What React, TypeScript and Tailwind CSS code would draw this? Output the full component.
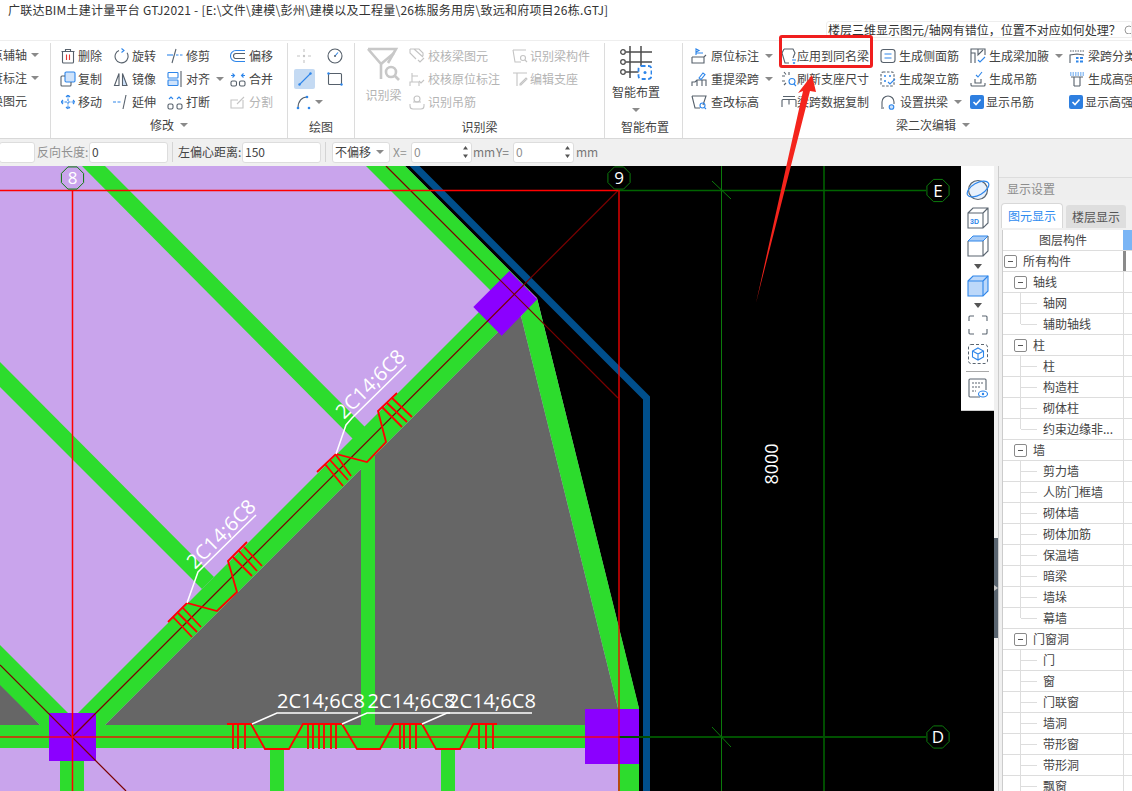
import React from "react";

const D = "#56606b";
const B = "#2e86ea";
const L = "#cfe3fb";
const G = "#c4c4c4";
const CAD = "'Open Sans', 'Liberation Sans', sans-serif";

function Ic({ children, s = 16 }: { children?: React.ReactNode; s?: number }) {
  return (
    <svg width={s} height={s} viewBox="0 0 16 16" fill="none" strokeWidth={1.1} className="shrink-0">
      {children}
    </svg>
  );
}

const icons: Record<string, React.ReactNode> = {
  trash: (
    <>
      <path d="M1.5 3.5h13M5.5 3.5V1.5h5v2M2.5 3.5V14a1 1 0 001 1h9a1 1 0 001-1V3.5" stroke={D} />
      <path d="M6.5 6.5v5.5M9.5 6.5v5.5" stroke="#e53935" />
    </>
  ),
  copy: (
    <>
      <rect x="5" y="1" width="10" height="10" rx="1.2" fill={L} stroke={B} />
      <path d="M5 5H2a1 1 0 00-1 1v8a1 1 0 001 1h8a1 1 0 001-1v-3" stroke={D} />
    </>
  ),
  move: (
    <path
      d="M8 1v14M1 8h14M6 3l2-2 2 2M6 13l2 2 2-2M3 6L1 8l2 2M13 6l2 2-2 2"
      stroke={B}
      strokeDasharray="2.5 1"
    />
  ),
  rotate: (
    <>
      <path d="M6 2.4a6.5 6.5 0 108 2.4" stroke={D} />
      <path d="M8.5 0.5L11 2.5 8.5 4.5" stroke={B} />
    </>
  ),
  mirror: (
    <>
      <path d="M6 2.5L1.5 14.5H6z" stroke={D} />
      <path d="M9.5 2.5l4.5 12H9.5z" fill={L} stroke={D} />
    </>
  ),
  extend: (
    <>
      <path d="M0 8h9" stroke={B} strokeDasharray="3 1.5" />
      <path d="M13 1l-3 14" stroke={D} />
    </>
  ),
  trim: (
    <>
      <path d="M0 7h6" stroke={B} />
      <path d="M9 1L5 15" stroke={D} />
      <path d="M9 7h7" stroke={B} strokeDasharray="2.5 1.5" />
    </>
  ),
  align: (
    <>
      <rect x="1" y="1.5" width="10" height="5.5" rx="0.8" stroke={B} />
      <rect x="1" y="9" width="10" height="5.5" rx="0.8" fill={L} stroke={B} />
      <path d="M14 0v16" stroke={D} />
    </>
  ),
  break: (
    <>
      <rect x="1" y="10" width="5" height="5" rx="1.5" stroke={D} />
      <rect x="10" y="10" width="5" height="5" rx="1.5" stroke={D} />
      <path d="M2 5l2-2 2 2M10 5l2-2 2 2" stroke={B} />
    </>
  ),
  offset: (
    <>
      <path d="M15 2.5H6a5.5 5.5 0 000 11h9" stroke={B} />
      <path d="M15 5.5H6a2.5 2.5 0 000 5h9" stroke={D} />
    </>
  ),
  merge: (
    <>
      <rect x="1" y="10" width="5.5" height="5" rx="1.5" stroke={D} />
      <rect x="9.5" y="10" width="5.5" height="5" rx="1.5" stroke={D} />
      <path d="M1 4.5h3M2.5 2.5l2 2-2 2M15 4.5h-3M13.5 2.5l-2 2 2 2" stroke={B} />
    </>
  ),
  split: (
    <>
      <path d="M13 6v8H1V6h7" stroke={G} />
      <path d="M7 10l7-7" stroke={G} />
    </>
  ),
  point: (
    <>
      <path d="M8 1v3M8 12v3M1 8h3M12 8h3" stroke={G} />
      <circle cx="8" cy="8" r="1.2" fill={G} />
    </>
  ),
  clock: (
    <>
      <circle cx="8" cy="8" r="7" stroke={D} />
      <path d="M8 8l3-3.5" stroke={B} />
      <circle cx="8" cy="8" r="1" fill={D} />
    </>
  ),
  line: (
    <>
      <path d="M2.5 13.5L13.5 2.5" stroke={B} />
      <circle cx="2.5" cy="13.5" r="1.2" fill={B} />
      <circle cx="13.5" cy="2.5" r="1.2" fill={B} />
    </>
  ),
  rect: (
    <>
      <rect x="1.5" y="2.5" width="13" height="11" rx="1" stroke={D} />
      <circle cx="1.5" cy="2.5" r="1.2" fill={B} />
      <circle cx="14.5" cy="13.5" r="1.2" fill={B} />
    </>
  ),
  arc: (
    <>
      <path d="M2 14C2 7 6 3 11 3" stroke={D} />
      <circle cx="2" cy="14" r="1.3" fill={B} />
      <circle cx="11" cy="3" r="1.3" fill={B} />
      <circle cx="13" cy="14" r="1.3" fill={B} />
    </>
  ),
  chk1: (
    <>
      <path d="M1 1h9l4 4v3M1 1v4l6 6M5 1l9 8" stroke={G} />
      <path d="M9 12l2 2 4-4" stroke={G} />
    </>
  ),
  chk2: (
    <>
      <path d="M1 15V11h9v4M3 11V2M3 5h6" stroke={G} />
      <path d="M10 10l2 2 3-3" stroke={G} />
    </>
  ),
  hang: (
    <>
      <circle cx="8" cy="5" r="3" stroke={G} />
      <path d="M1 10v2a3 3 0 003 3h8a3 3 0 003-3v-2M4 8h8" stroke={G} />
    </>
  ),
  idc: (
    <>
      <path d="M1 2h13M1 2l2 12h6" stroke={G} />
      <circle cx="11" cy="10" r="2.5" stroke={G} />
      <path d="M13 12l2 2" stroke={G} />
    </>
  ),
  edit: (
    <>
      <path d="M1 2h14M5 2v13" stroke={G} />
      <path d="M8 13l6-6 1 1-6 6H8z" stroke={G} />
    </>
  ),
  orig: (
    <>
      <path d="M1 9h12l2-2M1 9v6h12V9" stroke={D} />
      <path d="M5 7V1l3 1.5L5 4M5 5h7" stroke={B} />
    </>
  ),
  refetch: (
    <>
      <path d="M1 15V11h3l2-2 9 0v6M6 9v6M11 9v6" stroke={D} />
      <path d="M8 7l4-5 2 1.5-4 5z" stroke={B} />
    </>
  ),
  query: (
    <>
      <path d="M1 2h14l-3 9M1 2l3 12h5" stroke={D} />
      <circle cx="11.5" cy="11.5" r="2.5" stroke={B} />
      <path d="M13.5 13.5l1.5 1.5" stroke={B} />
    </>
  ),
  apply: (
    <>
      <path d="M3 1h9l2 4-2 5M3 1L1 5l3 10h4" stroke={D} />
      <path d="M11 12h4M12 14.5l1 1 1-1" stroke={B} />
    </>
  ),
  refresh: (
    <>
      <path d="M1 5h3M3 1l2 2.500M8 1v3M1 10h3M3 14l2-2" stroke={D} />
      <circle cx="11" cy="10.5" r="3" stroke={B} />
      <path d="M13 13l2 2" stroke={B} />
    </>
  ),
  span: <path d="M1 13V6.500a1 1 0 011-1h12a1 1 0 011 1V13M2 2.500h12M8 5.500v5" stroke={D} />,
  side: (
    <>
      <rect x="1" y="1.5" width="14" height="13" rx="2.5" stroke={D} />
      <path d="M4.5 6h7M4.5 10h7" stroke={B} />
    </>
  ),
  frame: (
    <>
      <rect x="1" y="1" width="13" height="14" rx="2" stroke={D} strokeDasharray="2.5 1.5" />
      <circle cx="5" cy="5" r="1" fill={B} />
      <circle cx="10" cy="5" r="1" fill={B} />
      <circle cx="5" cy="10" r="1" fill={B} />
      <path d="M8 11l2 2 5-5" stroke={B} />
    </>
  ),
  arch: (
    <>
      <path d="M2 13V8a6 6 0 0112 0v2" stroke={D} />
      <circle cx="11.5" cy="13" r="2.3" fill={L} stroke={B} />
      <path d="M1 14h3" stroke={D} />
    </>
  ),
  haunch: (
    <>
      <path d="M1 15V1h14v6M1 5h4v10" stroke={D} />
      <path d="M8 1v6l5-5" stroke={D} />
      <path d="M8 12l2 2 5-5" stroke={B} />
    </>
  ),
  genHang: (
    <>
      <path d="M1 12v2a1 1 0 001 1h12a1 1 0 001-1v-2M5 8v4h6V8" stroke={D} />
      <path d="M6 4l2 2 4-5" stroke={B} />
    </>
  ),
  cat: (
    <>
      <path d="M1 15V7l7-1 7 1" stroke={D} />
      <path d="M1 3h14" stroke={D} strokeDasharray="1.5 1" />
      <path d="M7 9h2.5v2H7zM11 9h3v2h-3zM7 12.500h2.500v2H7zM11 12.500h3v2h-3z" fill={B} />
    </>
  ),
  high: (
    <>
      <path d="M1 2h14M1 4h14" stroke={B} strokeDasharray="1.500 1" />
      <path d="M2 6h12M5 6v9M11 6v9M5 15h6" stroke={D} />
    </>
  ),
};

function Arrow({ className = "" }: { className?: string }) {
  return (
    <svg width="8" height="4" viewBox="0 0 8 4" className={`shrink-0 ${className}`}>
      <path d="M0 0h8L4 4z" fill="#8a8a8a" />
    </svg>
  );
}

function Item({
  icon,
  text,
  gap = "ml-[2px]",
  dim,
  arrow,
  arrowGap = "ml-[6px]",
}: {
  icon: string;
  text: string;
  gap?: string;
  dim?: boolean;
  arrow?: boolean;
  arrowGap?: string;
}) {
  return (
    <div className={`flex h-[23px] items-center whitespace-nowrap ${dim ? "text-[#b4b4b4]" : "text-[#444]"}`}>
      <Ic>{icons[icon]}</Ic>
      <span className={gap}>{text}</span>
      {arrow && <Arrow className={arrowGap} />}
    </div>
  );
}

function Check({ text }: { text: string }) {
  return (
    <div className="flex h-[23px] items-center whitespace-nowrap text-[#444]">
      <span className="flex h-[14px] w-[14px] items-center justify-center rounded-[2px] bg-[#2e7fe0]">
        <svg width="10" height="10" viewBox="0 0 10 10" fill="none">
          <path d="M1.500 5l2.500 2.500 4.500-5" stroke="#fff" strokeWidth="1.600" />
        </svg>
      </span>
      <span className="ml-[2px]">{text}</span>
    </div>
  );
}

function Group({
  w,
  label,
  arrow,
  labelClass = "",
  children,
}: {
  w: string;
  label: string;
  arrow?: boolean;
  labelClass?: string;
  children: React.ReactNode;
}) {
  return (
    <div className={`flex h-[95px] shrink-0 flex-col border-r border-[#dcdcdc] ${w}`}>
      <div className="flex h-[69px] pt-px">{children}</div>
      <div className={`flex flex-1 items-center justify-center text-[12px] text-[#444] ${labelClass}`}>
        <span>{label}</span>
        {arrow && <Arrow className="ml-[6px]" />}
      </div>
    </div>
  );
}

function FunnelBig() {
  return (
    <svg width="36" height="36" viewBox="0 0 36 36" fill="none" stroke="#c8c8c8" strokeWidth="2.600">
      <path d="M2 2h28L22 16M2 2l13 15v15" />
      <path d="M15 17L28 6" />
      <circle cx="25" cy="25" r="5" />
      <path d="M29 29l4 4" />
    </svg>
  );
}

function SmartBig() {
  return (
    <svg width="32" height="34" viewBox="0 0 32 34" fill="none" className="shrink-0">
      <path d="M6 6h26M6 16h26M6 26h13M10 0v32M21 0v21" stroke="#4c4c4c" strokeWidth="1.500" />
      <circle cx="3" cy="6" r="2.300" fill="#fff" stroke="#4c4c4c" strokeWidth="1.300" />
      <circle cx="3" cy="16" r="2.300" fill="#fff" stroke="#4c4c4c" strokeWidth="1.300" />
      <circle cx="3" cy="26" r="2.300" fill="#fff" stroke="#4c4c4c" strokeWidth="1.300" />
      <rect x="18.500" y="20" width="13" height="13" rx="3" fill="#fff" stroke="#2e86ea" strokeWidth="1.800" strokeDasharray="4 2.500" />
      <circle cx="25" cy="26.500" r="1.500" fill="#2e86ea" />
    </svg>
  );
}

function Ribbon() {
  return (
    <div className="flex h-[99px] overflow-hidden border-b border-[#d8d8d8] border-t border-t-[#eeeeee] bg-white pt-[2px] text-[12px]">
      <Group w="w-[51px]" label="">
        <div className="flex w-[50px] flex-col items-end overflow-hidden pr-[11px]">
          {[
            ["两点辅轴", true],
            ["长度标注", true],
            ["转换图元", false],
          ].map(([t, a]) => (
            <div key={t as string} className="flex h-[23px] items-center whitespace-nowrap text-[#444]">
              <span>{t as string}</span>
              {a ? <Arrow className="ml-[4px]" /> : <span className="w-[12px]" />}
            </div>
          ))}
        </div>
      </Group>
      <Group w="w-[237px]" label="修改" arrow>
        <div className="ml-[9px] w-[53px]">
          <Item icon="trash" text="删除" />
          <Item icon="copy" text="复制" />
          <Item icon="move" text="移动" />
        </div>
        <div className="w-[54px]">
          <Item icon="rotate" text="旋转" gap="ml-[3px]" />
          <Item icon="mirror" text="镜像" gap="ml-[3px]" />
          <Item icon="extend" text="延伸" gap="ml-[3px]" />
        </div>
        <div className="w-[63px]">
          <Item icon="trim" text="修剪" gap="ml-[3px]" />
          <Item icon="align" text="对齐" gap="ml-[3px]" arrow />
          <Item icon="break" text="打断" gap="ml-[3px]" />
        </div>
        <div>
          <Item icon="offset" text="偏移" gap="ml-[3px]" />
          <Item icon="merge" text="合并" gap="ml-[3px]" />
          <Item icon="split" text="分割" gap="ml-[3px]" dim />
        </div>
      </Group>
      <Group w="w-[67px]" label="绘图" labelClass="pt-[4px]">
        <div className="ml-[6px] w-[32px]">
          <div className="flex h-[23px] items-center pl-[2px]">
            <Ic>{icons.point}</Ic>
          </div>
          <div className="flex h-[23px] items-center">
            <div className="flex h-[20px] w-[21px] items-center justify-center rounded-[2px] bg-[#c4daf3]">
              <Ic>{icons.line}</Ic>
            </div>
          </div>
          <div className="flex h-[23px] items-center pl-[2px]">
            <Ic>{icons.arc}</Ic>
            <Arrow className="ml-[3px]" />
          </div>
        </div>
        <div className="ml-[1px]">
          <div className="flex h-[23px] items-center">
            <Ic>{icons.clock}</Ic>
          </div>
          <div className="flex h-[23px] items-center">
            <Ic>{icons.rect}</Ic>
          </div>
        </div>
      </Group>
      <Group w="w-[250px]" label="识别梁" labelClass="pt-[4px]">
        <div className="flex w-[54px] flex-col items-center pl-[3px] pt-[3px] text-[#b4b4b4]">
          <FunnelBig />
          <span className="mt-[3px]">识别梁</span>
        </div>
        <div className="w-[103px]">
          <Item icon="chk1" text="校核梁图元" gap="ml-[3px]" dim />
          <Item icon="chk2" text="校核原位标注" gap="ml-[3px]" dim />
          <Item icon="hang" text="识别吊筋" gap="ml-[3px]" dim />
        </div>
        <div>
          <Item icon="idc" text="识别梁构件" gap="ml-[2px]" dim />
          <Item icon="edit" text="编辑支座" gap="ml-[2px]" dim />
        </div>
      </Group>
      <Group w="w-[78px]" label="智能布置" labelClass="pt-[4px] pl-[3px]">
        <div className="ml-[7px] flex w-[48px] flex-col items-center pt-[2px] text-[#444]">
          <SmartBig />
          <span className="mt-[3px] whitespace-nowrap">智能布置</span>
          <Arrow className="mt-[7px]" />
        </div>
      </Group>
      <div className="flex h-[95px] w-[500px] shrink-0 flex-col">
        <div className="flex h-[69px] pt-px pl-[8px]">
          <div className="w-[90px] shrink-0">
            <Item icon="orig" text="原位标注" gap="ml-[4px]" arrow />
            <Item icon="refetch" text="重提梁跨" gap="ml-[4px]" arrow />
            <Item icon="query" text="查改标高" gap="ml-[4px]" />
          </div>
          <div className="w-[99px] shrink-0">
            <Item icon="apply" text="应用到同名梁" gap="ml-[0px]" />
            <Item icon="refresh" text="刷新支座尺寸" gap="ml-[0px]" />
            <Item icon="span" text="梁跨数据复制" gap="ml-[0px]" />
          </div>
          <div className="w-[90px] shrink-0">
            <Item icon="side" text="生成侧面筋" gap="ml-[3px]" />
            <Item icon="frame" text="生成架立筋" gap="ml-[3px]" />
            <Item icon="arch" text="设置拱梁" gap="ml-[4px]" arrow />
          </div>
          <div className="w-[99px] shrink-0">
            <Item icon="haunch" text="生成梁加腋" gap="ml-[3px]" arrow />
            <Item icon="genHang" text="生成吊筋" gap="ml-[3px]" />
            <Check text="显示吊筋" />
          </div>
          <div className="shrink-0">
            <Item icon="cat" text="梁跨分类" gap="ml-[3px]" />
            <Item icon="high" text="生成高强箍筋" gap="ml-[3px]" />
            <Check text="显示高强箍筋" />
          </div>
        </div>
        <div className="flex flex-1 items-center justify-center text-[12px] text-[#444]">
          <span>梁二次编辑</span>
          <Arrow className="ml-[6px]" />
        </div>
      </div>
    </div>
  );
}

function Spin() {
  return (
    <svg width="7" height="14" viewBox="0 0 7 14" className="shrink-0">
      <path d="M3.500 1L6 4.500H1zM3.500 13L1 9.500h5z" fill="#555" />
    </svg>
  );
}

function Box({ w, children, className = "" }: { w: string; children?: React.ReactNode; className?: string }) {
  return (
    <div className={`flex h-[21px] shrink-0 items-center rounded-[3px] border border-[#dddddd] bg-white px-[2px] ${w} ${className}`}>
      {children}
    </div>
  );
}

function OptionBar() {
  return (
    <div className="flex h-[27px] items-center bg-[#f0f0f0] pb-px text-[12px] text-[#444]">
      <Box w="w-[36px]" className="-ml-px" />
      <span className="ml-[2px] w-[52px] shrink-0 whitespace-nowrap text-[#909090]">反向长度:</span>
      <Box w="w-[79px]">0</Box>
      <span className="ml-[4px] h-[20px] w-px shrink-0 bg-[#d4d4d4]" />
      <span className="ml-[5px] w-[64px] shrink-0 whitespace-nowrap">左偏心距离:</span>
      <Box w="w-[79px]">150</Box>
      <span className="ml-[4px] h-[20px] w-px shrink-0 bg-[#d4d4d4]" />
      <Box w="w-[58px]" className="ml-[6px] justify-between pr-[5px]">
        不偏移
        <Arrow />
      </Box>
      <span className="ml-[3px] w-[18px] shrink-0 text-[#909090]">X=</span>
      <Box w="w-[61px]" className="justify-between pr-[2px] text-[#909090]">
        0
        <Spin />
      </Box>
      <span className="ml-[1px] w-[23px] shrink-0 text-[#777]">mm</span>
      <span className="w-[17px] shrink-0 text-[#777]">Y=</span>
      <Box w="w-[61px]" className="justify-between pr-[2px] text-[#909090]">
        0
        <Spin />
      </Box>
      <span className="ml-[2px] shrink-0 text-[#777]">mm</span>
    </div>
  );
}

function Octa({ cx, cy, t, fs = 17 }: { cx: number; cy: number; t: string; fs?: number }) {
  const pts = Array.from({ length: 8 }, (_, i) => {
    const a = Math.PI / 8 + (i * Math.PI) / 4;
    return `${cx + 12 * Math.cos(a)},${cy + 12 * Math.sin(a)}`;
  }).join(" ");
  return (
    <>
      <polygon points={pts} fill="none" stroke="#0d7a0d" strokeWidth="1" />
      <text x={cx} y={cy + 6} fill="#fff" fontSize={fs} textAnchor="middle" fontFamily={CAD}>
        {t}
      </text>
    </>
  );
}

function Stirrups({ segs }: { segs: number[][] }) {
  return (
    <>
      {segs.map((s, i) => (
        <line key={i} x1={s[0]} y1={s[1]} x2={s[2]} y2={s[3]} stroke="#ff0000" strokeWidth="1.800" />
      ))}
    </>
  );
}

function Label({ x, y, rot }: { x: number; y: number; rot?: boolean }) {
  return (
    <text
      x={x}
      y={y}
      fill="#fff"
      fontSize="20"
      textLength="88"
      lengthAdjust="spacingAndGlyphs"
      fontFamily={CAD}
      transform={rot ? `rotate(-45 ${x} ${y})` : undefined}
    >
      2C14;6C8
    </text>
  );
}

function Canvas() {
  const purple = "#8b00ff";
  const green = "#2ddc2d";
  const bottomX = [233, 238, 245, 308, 313, 319, 324, 331, 336, 400, 404, 410, 416, 479, 486, 493];
  return (
    <svg width="961" height="625" viewBox="0 166 961 625" className="block shrink-0">
      <rect x="0" y="166" width="961" height="625" fill="#000" />
      <polygon points="0,166 405,166 537,298 639,709 639,791 0,791" fill="#c9a4ec" />
      <polygon points="505,325 521,316 618,708 618,725 105,725" fill="#666666" />
      <polygon points="0,683 40,725 0,725" fill="#666666" />
      <g fill={green}>
        <polygon points="366,166 405,166 530,291 491,291" />
        <polygon points="537,298 639,708 639,791 618,791 618,708 521,316" />
        <polygon points="495,296 522,308 105,725 66,725" />
        <polygon points="0,645 68,713 70,725 40,725 0,685" />
        <polygon points="82,166 105,166 366,428 354,440" />
        <polygon points="0,362 0,387 202,589 214,577" />
        <rect x="361" y="455" width="14" height="270" />
        <rect x="0" y="725" width="618" height="23" />
        <rect x="60" y="748" width="24" height="43" />
        <rect x="270" y="748" width="14" height="43" />
        <rect x="441" y="748" width="14" height="43" />
      </g>
      <polygon points="509.300,271 537.300,299.300 501.700,335.700 473.300,307" fill={purple} />
      <rect x="49" y="713" width="47" height="48" fill={purple} />
      <rect x="585" y="709" width="54" height="55" fill={purple} />
      <path d="M412 163.500L646.500 398V791" fill="none" stroke="#004f8c" strokeWidth="7" />

      <line x1="721.500" y1="166" x2="721.500" y2="791" stroke="#0b7a0b" strokeWidth="1" />
      <line x1="824" y1="166" x2="824" y2="791" stroke="#004d00" strokeWidth="2" />
      <line x1="618" y1="190.500" x2="926" y2="190.500" stroke="#006400" strokeWidth="1.500" />
      <line x1="618" y1="737" x2="926" y2="737" stroke="#005000" strokeWidth="2" />
      <line x1="712" y1="181" x2="731" y2="199" stroke="#0b7a0b" strokeWidth="1" />
      <line x1="712" y1="727" x2="731" y2="747" stroke="#0b7a0b" strokeWidth="1" />

      <line x1="618.500" y1="190" x2="72" y2="737" stroke="#7a0000" strokeWidth="1.200" />
      <line x1="0" y1="665" x2="126" y2="791" stroke="#7a0000" strokeWidth="1.200" />
      <line x1="386" y1="166" x2="618" y2="398" stroke="#7a0000" strokeWidth="1.200" />

      <line x1="0" y1="190.500" x2="618" y2="190.500" stroke="#ff0000" strokeWidth="1.500" />
      <line x1="72.500" y1="190" x2="72.500" y2="791" stroke="#ff0000" strokeWidth="1.500" />
      <line x1="619" y1="190" x2="619" y2="791" stroke="#ff0000" strokeWidth="2" opacity="0.65" />
      <line x1="0" y1="737" x2="619" y2="737" stroke="#ff0000" strokeWidth="2" opacity="0.65" />

      <Octa cx={72.500} cy={178} t="8" />
      <Octa cx={619} cy={178} t="9" />
      <Octa cx={938} cy={190.500} t="E" />
      <Octa cx={938} cy={737} t="D" />
      <text
        x="778"
        y="464"
        fill="#fff"
        fontSize="18"
        textAnchor="middle"
        fontFamily={CAD}
        transform="rotate(-90 778 464)"
      >
        8000
      </text>

      <polyline
        points="227,724 251,724 265,749 289,749 303,724 342,724 357,749 380,749 394,724 422,724 436,749 460,749 473,724 497,724"
        fill="none"
        stroke="#ff0000"
        strokeWidth="1.800"
      />
      <Stirrups segs={bottomX.map((x) => [x, 724, x, 749])} />
      <polyline points="168,622 187,603 217,611 237,592 228,561 247,542" fill="none" stroke="#ff0000" strokeWidth="1.800" />
      <Stirrups
        segs={[
          [173, 617, 192, 637],
          [178, 613, 197, 632],
          [183, 608, 201, 627],
          [233, 557, 252, 576],
          [239, 551, 257, 571],
          [244, 547, 262, 566],
        ]}
      />
      <polyline points="317,472 336,454 367,462 386,442 378,411 397,393" fill="none" stroke="#ff0000" strokeWidth="1.800" />
      <Stirrups
        segs={[
          [325, 464, 343, 486],
          [330, 460, 348, 480],
          [336, 455, 351, 476],
          [382, 407, 402, 427],
          [387, 403, 407, 422],
          [392, 398, 412, 417],
        ]}
      />

      <g fill="none" stroke="#fff" strokeWidth="1.500">
        <polyline points="252,724 277,713 358,713" />
        <polyline points="342,724 367,713 450,713" />
        <polyline points="422,724 447,713 532,713" />
        <polyline points="187,603 198,572 203,567 256,515" />
        <polyline points="336,454 346,425 352,418 406,365" />
      </g>
      <Label x={277} y={708} />
      <Label x={367.500} y={708} />
      <Label x={448} y={708} />
      <Label x={195} y={570} rot />
      <Label x={344} y={420} rot />
    </svg>
  );
}

function ToolIcons() {
  const blue = "#2e86ea";
  const dk = "#5a6570";
  return (
    <div className="flex h-[245px] w-[33px] flex-col items-center border-b border-[#ccc] bg-white pt-[11px]">
      <svg width="24" height="24" viewBox="0 0 24 24" fill="none" stroke={blue} strokeWidth="1.200">
        <circle cx="12" cy="13" r="9.500" fill="#e8f1fc" stroke={dk} />
        <ellipse cx="12" cy="12" rx="12" ry="6" transform="rotate(-30 12 12)" />
      </svg>
      <svg width="22" height="22" viewBox="0 0 22 22" fill="none" className="mt-[6px]">
        <path d="M1 6l5-5h15v15l-5 5H1zM1 6h15v15M16 6l5-5" stroke={dk} strokeWidth="1.100" />
        <text x="3" y="17" fontSize="7" fontWeight="700" fill={blue} fontFamily="'Liberation Sans', sans-serif">
          3D
        </text>
      </svg>
      <svg width="22" height="22" viewBox="0 0 22 22" fill="none" className="mt-[6px]">
        <path d="M1 6l5-5h15l-5 5z" fill="#a9ccf6" stroke={blue} strokeWidth="1" />
        <path d="M1 6v15h15V6M16 21l5-5V1" stroke={dk} strokeWidth="1.100" />
      </svg>
      <svg width="8" height="5" viewBox="0 0 8 5" className="mt-[7px]">
        <path d="M0 0h8L4 5z" fill="#555" />
      </svg>
      <svg width="22" height="22" viewBox="0 0 22 22" fill="none" className="mt-[6px]">
        <path d="M1 6l5-5h15v15l-5 5H1z" fill="#bcd8fa" stroke={blue} strokeWidth="1.100" />
        <path d="M1 6h15v15M16 6l5-5" stroke={blue} strokeWidth="1.100" />
      </svg>
      <svg width="8" height="5" viewBox="0 0 8 5" className="mt-[6px]">
        <path d="M0 0h8L4 5z" fill="#555" />
      </svg>
      <svg width="20" height="20" viewBox="0 0 20 20" fill="none" stroke={dk} strokeWidth="1.100" className="mt-[7px]">
        <path d="M1 6V2a1 1 0 011-1h4M14 1h4a1 1 0 011 1v4M19 14v4a1 1 0 01-1 1h-4M6 19H2a1 1 0 01-1-1v-4" />
      </svg>
      <svg width="20" height="20" viewBox="0 0 20 20" fill="none" className="mt-[9px]">
        <rect x="0.500" y="0.500" width="19" height="19" rx="2.500" stroke={dk} strokeDasharray="3 2" />
        <path d="M10 4l5.500 3v6L10 16l-5.500-3V7zM4.500 7l5.500 3 5.500-3M10 10v6" stroke={blue} strokeWidth="1.100" />
      </svg>
      <div className="mt-[7px] h-px w-[23px] bg-[#aaa]" />
      <svg width="20" height="20" viewBox="0 0 20 20" fill="none" className="mt-[6px]">
        <path d="M12 19H2a1 1 0 01-1-1V2a1 1 0 011-1h15a1 1 0 011 1v10" stroke={dk} strokeWidth="1.100" />
        <path d="M4 5h11M4 9h8M4 13h4" stroke={dk} strokeWidth="1.100" strokeDasharray="2 1" />
        <ellipse cx="15" cy="16" rx="4.500" ry="3" stroke={blue} strokeWidth="1.100" />
        <circle cx="15" cy="16" r="1.200" fill={blue} />
      </svg>
    </div>
  );
}

type Row = { t: string; l: 0 | 1 | 2; last?: boolean };
const rows: Row[] = [
  { t: "所有构件", l: 0 },
  { t: "轴线", l: 1 },
  { t: "轴网", l: 2 },
  { t: "辅助轴线", l: 2, last: true },
  { t: "柱", l: 1 },
  { t: "柱", l: 2 },
  { t: "构造柱", l: 2 },
  { t: "砌体柱", l: 2 },
  { t: "约束边缘非...", l: 2, last: true },
  { t: "墙", l: 1 },
  { t: "剪力墙", l: 2 },
  { t: "人防门框墙", l: 2 },
  { t: "砌体墙", l: 2 },
  { t: "砌体加筋", l: 2 },
  { t: "保温墙", l: 2 },
  { t: "暗梁", l: 2 },
  { t: "墙垛", l: 2 },
  { t: "幕墙", l: 2, last: true },
  { t: "门窗洞", l: 1 },
  { t: "门", l: 2 },
  { t: "窗", l: 2 },
  { t: "门联窗", l: 2 },
  { t: "墙洞", l: 2 },
  { t: "带形窗", l: 2 },
  { t: "带形洞", l: 2 },
  { t: "飘窗", l: 2 },
];

function Minus({ className = "" }: { className?: string }) {
  return (
    <span className={`flex h-[13px] w-[13px] shrink-0 items-center justify-center rounded-[2px] border border-[#8a8a8a] bg-white ${className}`}>
      <span className="h-px w-[5px] bg-[#555]" />
    </span>
  );
}

function TreeRow({ r, i }: { r: Row; i: number }) {
  return (
    <div className="flex h-[21px] border-b border-[#dddddd] bg-white">
      <div className="flex w-[120px] shrink-0 items-center overflow-hidden whitespace-nowrap text-[#444]">
        {r.l === 0 && (
          <>
            <Minus className="ml-px" />
            <span className="ml-[6px]">{r.t}</span>
          </>
        )}
        {r.l === 1 && (
          <>
            <Minus className="ml-[11px]" />
            <span className="ml-[6px]">{r.t}</span>
          </>
        )}
        {r.l === 2 && (
          <>
            <span className={`ml-[17px] w-px shrink-0 bg-[#dddddd] ${r.last ? "h-[10px] self-start" : "h-full"}`} />
            <span className="h-px w-[16px] shrink-0 bg-[#dddddd]" />
            <span className="ml-[6px]">{r.t}</span>
          </>
        )}
      </div>
      <div className={`flex-1 ${i === 0 ? "border-l-[3px] border-[#8a8a8a]" : "border-l border-[#dddddd]"}`} />
    </div>
  );
}

function Panel() {
  return (
    <div className="flex h-[625px] w-[134px] shrink-0 flex-col overflow-hidden border-l border-[#cccccc] bg-[#f0f0f0] text-[12px]">
      <div className="mt-[11px] flex h-[23px] shrink-0 items-center border-t border-[#dddddd] bg-[#eeeeee] pl-[8px] text-[#8c8c8c]">
        显示设置
      </div>
      <div className="mt-[3px] flex h-[25px] shrink-0 items-end pl-[2px]">
        <div className="flex h-[25px] w-[62px] items-center justify-center rounded-t-[4px] border border-b-0 border-[#d8d8d8] bg-white text-[#2f8cf0]">
          图元显示
        </div>
        <div className="ml-[3px] flex h-[23px] w-[60px] items-center justify-center rounded-t-[3px] bg-[#dedede] text-[#555]">
          楼层显示
        </div>
      </div>
      <div className="ml-[3px] mt-[2px] flex-1 border-l border-[#cccccc] bg-white">
        <div className="flex h-[21px] border-b border-[#dddddd] text-[#444]">
          <div className="flex w-[120px] shrink-0 items-center justify-center">图层构件</div>
          <div className="flex-1 bg-[#7ab5f5]" />
        </div>
        {rows.map((r, i) => (
          <TreeRow key={i} r={r} i={i} />
        ))}
      </div>
    </div>
  );
}

export default function App() {
  return (
    <div
      className="relative flex h-[791px] w-[1132px] flex-col overflow-hidden bg-white text-[12px]"
      style={{ fontFamily: "'Noto Sans CJK SC', 'Noto Sans', sans-serif" }}
    >
      <div className="flex h-[40px] shrink-0 justify-between">
        <div className="self-start whitespace-nowrap pl-[8px] text-[12px] leading-[20px] tracking-[0.24px] text-[#333]">
          广联达BIM土建计量平台 GTJ2021 - [E:\文件\建模\彭州\建模以及工程量\26栋服务用房\致远和府项目26栋.GTJ]
        </div>
        <div className="mb-[2px] flex h-[17px] w-[306px] shrink-0 items-center justify-between self-end overflow-hidden rounded-l-[3px] border border-[#eeeeee] pl-[1px] leading-none text-[#333]">
          <span className="whitespace-nowrap">楼层三维显示图元/轴网有错位，位置不对应如何处理？</span>
          <svg width="9" height="9" viewBox="0 0 9 9" fill="none" className="mr-[-2px] shrink-0">
            <circle cx="5" cy="5" r="4" stroke="#999" />
          </svg>
        </div>
      </div>
      <Ribbon />
      <OptionBar />
      <div className="flex h-[625px] shrink-0">
        <Canvas />
        <div className="flex w-[33px] shrink-0 flex-col bg-black">
          <ToolIcons />
        </div>
        <div className="w-[4px] shrink-0 bg-[#f0f0f0] pt-[372px]">
          <div className="flex h-[100px] items-center justify-center bg-[#5a6570]">
            <svg width="4" height="6" viewBox="0 0 4 6">
              <path d="M0 0l4 3-4 3z" fill="#c8c8c8" />
            </svg>
          </div>
        </div>
        <Panel />
      </div>
      {/* annotation drawn over the screenshot */}
      <div className="absolute left-[779px] top-[35px] h-[33px] w-[94px] rounded-[3px] border-[3px] border-[#f01e1e]" />
      <svg width="1132" height="791" viewBox="0 0 1132 791" className="pointer-events-none absolute left-0 top-0">
        <polygon points="812,75 816,92 810,91 756,303 803,91 798,93" fill="#f4241c" />
      </svg>
    </div>
  );
}
